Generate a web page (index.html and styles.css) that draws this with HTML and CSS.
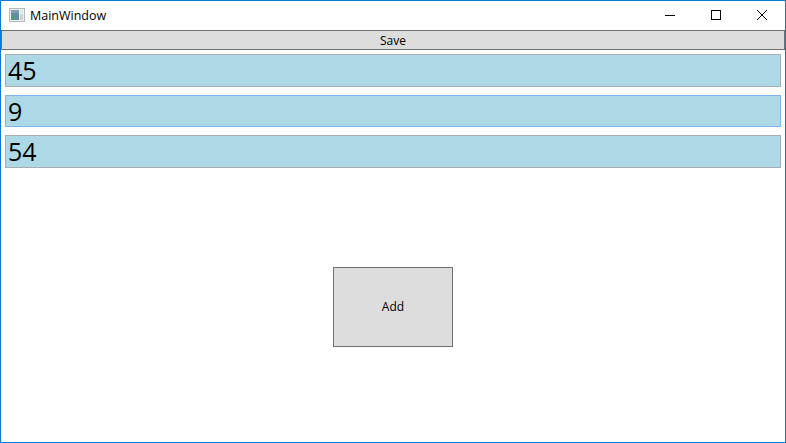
FILE: index.html
```html
<!DOCTYPE html>
<html lang="en">
<head>
<meta charset="utf-8">
<title>MainWindow</title>
<link rel="stylesheet" href="styles.css">
</head>
<body>
<div class="window">
  <header class="titlebar">
    <svg class="app-icon" width="16" height="14" viewBox="0 0 16 14">
      <rect x="0.5" y="0.5" width="15" height="13" fill="#eef0f0" stroke="#b4b9bb"/>
      <rect x="2" y="2" width="8" height="10" fill="#5f8f9c"/>
      <rect x="2" y="2" width="8" height="3" fill="#7f9fb4"/>
      <rect x="2" y="8" width="5" height="4" fill="#4f9a80"/>
      <rect x="11" y="2" width="3" height="3" fill="#e4e8e8"/>
      <rect x="11" y="6" width="3" height="6" fill="#cfd4d4"/>
    </svg>
    <span class="title">MainWindow</span>
    <div class="controls">
      <span class="control"><svg width="12" height="12" viewBox="0 0 12 12"><path d="M1 6.5H11" stroke="#000" fill="none"/></svg></span>
      <span class="control"><svg width="12" height="12" viewBox="0 0 12 12"><rect x="1.5" y="1.5" width="9" height="9" stroke="#000" fill="none"/></svg></span>
      <span class="control"><svg width="12" height="12" viewBox="0 0 12 12"><path d="M1 1L11 11M11 1L1 11" stroke="#000" fill="none"/></svg></span>
    </div>
  </header>
  <button class="btn save">Save</button>
  <main class="content">
    <input class="field" type="text" value="45">
    <input class="field focused" type="text" value="9">
    <input class="field" type="text" value="54">
    <div class="center">
      <button class="btn add">Add</button>
    </div>
  </main>
</div>
</body>
</html>
```
FILE: styles.css
```css
* { box-sizing: border-box; }
html, body { margin: 0; padding: 0; background: #fff; }
body { font-family: "Open Sans", "Noto Sans", sans-serif; color: #000; }
.window {
  width: 786px;
  height: 443px;
  border: 1px solid #0a7ad6;
  display: flex;
  flex-direction: column;
  background: #fff;
  overflow: hidden;
}
.titlebar {
  height: 29px;
  flex: none;
  display: flex;
  align-items: center;
  padding-left: 8px;
}
.app-icon { flex: none; margin-top: -1px; }
.title { margin-left: 5px; font-size: 12.5px; margin-top: -1px; }
.controls { margin-left: auto; display: flex; }
.control {
  width: 46px;
  height: 29px;
  display: flex;
  align-items: center;
  justify-content: center;
}
.control svg { display: block; margin-top: -1px; }
.btn {
  background: #dddddd;
  border: 1px solid #707070;
  font-family: inherit;
  font-size: 12px;
  color: #000;
  padding: 0;
}
.save { height: 20px; width: 784px; flex: none; display: block; }
.content {
  flex: 1;
  min-height: 0;
  display: flex;
  flex-direction: column;
  padding: 0 4px;
}
.field {
  width: 776px;
  height: 33px;
  flex: none;
  margin: 4px 0;
  background: #add8e6;
  border: 1px solid #a6adb3;
  font-family: inherit;
  font-size: 25px;
  color: #000;
  padding: 0 2px 1px;
  outline: none;
}
.field.focused { border-color: #7eb4ea; height: 32px; }
.center {
  flex: 1;
  display: flex;
  align-items: center;
  justify-content: center;
}
.add { width: 120px; height: 80px; padding-bottom: 1px; }
```
